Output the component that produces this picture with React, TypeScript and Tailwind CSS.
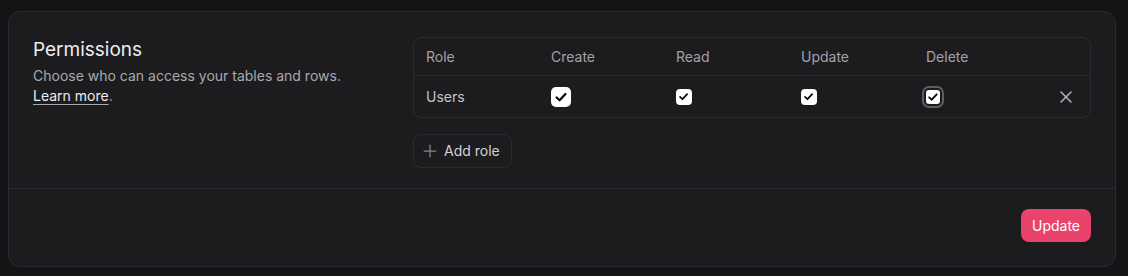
import { Plus, X } from 'lucide-react'

const columns = ['Role', 'Create', 'Read', 'Update', 'Delete']

function Check({ size = 16 }: { size?: number }) {
  return (
    <svg width={size * 0.7} height={size * 0.7} viewBox="0 0 12 12" fill="none">
      <path d="M2.2 6.4 4.8 8.8 9.8 3.4" stroke="#0b0b0c" strokeWidth="1.9" strokeLinecap="round" strokeLinejoin="round" />
    </svg>
  )
}

export default function App() {
  return (
    <div className="min-h-screen bg-[#141416] pt-[11px] pl-2" style={{ fontFamily: 'Inter, "Noto Sans", sans-serif' }}>
      <div className="w-[1108px] rounded-xl border border-[#2b2b2f] bg-[#1c1c1f]">
        {/* Top section */}
        <div className="flex gap-6 px-6 pt-6 pb-5">
          <div className="w-[356px]">
            <h2 className="text-[19px] leading-7 text-[#ededf0]">Permissions</h2>
            <p className="mt-0.5 text-sm leading-5 text-[#a9a9ae]">
              Choose who can access your tables and rows.
              <br />
              <span className="text-[#ededf0] underline underline-offset-[3px] decoration-[#a9a9ae]">Learn more</span>.
            </p>
          </div>

          <div className="flex-1 pt-px">
            {/* Table */}
            <div className="rounded-lg border border-[#2b2b2f]">
              <div className="grid h-[38px] grid-cols-[125px_125px_125px_125px_125px_1fr] items-center border-b border-[#2b2b2f] pl-3 text-sm text-[#a2a2a7]">
                {columns.map((c) => (
                  <div key={c}>{c}</div>
                ))}
                <div />
              </div>
              <div className="grid h-[41px] grid-cols-[125px_125px_125px_125px_125px_1fr] items-center pl-3 text-sm text-[#c3c3c8]">
                <div>Users</div>
                <div>
                  <span className="flex h-5 w-5 items-center justify-center rounded-[5px] bg-white">
                    <Check size={20} />
                  </span>
                </div>
                <div>
                  <span className="flex h-4 w-4 items-center justify-center rounded-[4px] bg-white">
                    <Check />
                  </span>
                </div>
                <div>
                  <span className="flex h-4 w-4 items-center justify-center rounded-[4px] bg-white">
                    <Check />
                  </span>
                </div>
                <div className="pt-px">
                  <span className="flex h-[14px] w-[14px] items-center justify-center rounded-[3px] bg-white ring-2 ring-[#5d5d62] ring-offset-2 ring-offset-[#1c1c1f]">
                    <Check size={17} />
                  </span>
                </div>
                <div className="flex justify-end pr-[14px]">
                  <X className="h-5 w-5 text-[#b8b8bd]" strokeWidth={1.75} />
                </div>
              </div>
            </div>

            {/* Add role */}
            <button className="mt-4 flex h-[34px] items-center gap-1 rounded-lg border border-[#2b2b2f] pr-[11px] pl-[6px] text-sm text-[#d2d2d6]">
              <Plus className="h-5 w-5 text-[#85858a]" strokeWidth={1.5} />
              Add role
            </button>
          </div>
        </div>

        {/* Footer */}
        <div className="flex justify-end border-t border-[#2b2b2f] px-6 pt-5 pb-6">
          <button className="h-[33px] rounded-lg bg-[#ea436b] px-[11px] text-sm text-white">Update</button>
        </div>
      </div>
    </div>
  )
}
